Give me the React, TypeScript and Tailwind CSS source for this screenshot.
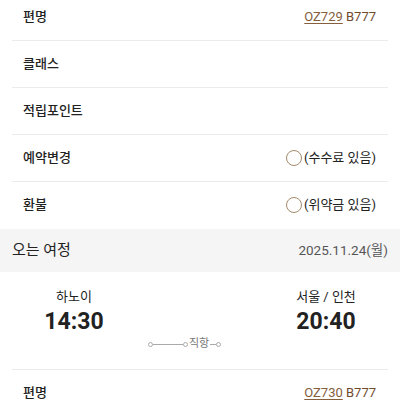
const font = { fontFamily: 'Roboto, "Noto Sans CJK KR", "Noto Sans", sans-serif' };

function Row({ label, children, last }: { label: string; children?: React.ReactNode; last?: boolean }) {
  return (
    <div className={`mx-3 flex h-[46px] items-center justify-between pl-[11px] pr-3 ${last ? "" : "box-content border-b border-[#ececec]"}`}>
      <span className="text-[13px] font-medium text-[#222]">{label}</span>
      {children}
    </div>
  );
}

function Flight({ no }: { no: string }) {
  return (
    <span className="text-[13px] leading-[18px] text-[#6f4b2c]">
      <span className="text-[#86603d] underline underline-offset-2">{no}</span> B777
    </span>
  );
}

function Fee({ text }: { text: string }) {
  return (
    <span className="flex items-center gap-[2px] text-[13px] text-[#222]">
      <span className="h-[16px] w-[16px] rounded-full border-[1.5px] border-[#a48a6c]" />
      {text}
    </span>
  );
}

export default function App() {
  return (
    <div className="h-[400px] w-[400px] overflow-hidden bg-white" style={font}>
      <div className="-mt-[6px]">
        <Row label="편명">
          <Flight no="OZ729" />
        </Row>
        <Row label="클래스" />
        <Row label="적립포인트" />
        <Row label="예약변경">
          <Fee text="(수수료 있음)" />
        </Row>
        <Row label="환불" last>
          <Fee text="(위약금 있음)" />
        </Row>
        <div className="mt-[1px] flex h-[43px] items-center justify-between bg-[#f5f5f5] px-3">
          <span className="text-[15px] text-[#222]">오는 여정</span>
          <span className="text-[13.5px] text-[#555]">2025.11.24(월)</span>
        </div>
        <div className="mx-3 box-content h-[97px] border-b border-[#ececec]">
          <div className="flex justify-between pt-[15px]">
            <div className="flex w-[124px] flex-col items-center">
              <span className="text-[13px] leading-[19px] text-[#222]">하노이</span>
              <span className="text-[23px] font-bold leading-[32px] text-[#222]">14:30</span>
            </div>
            <div className="flex w-[124px] flex-col items-center">
              <span className="text-[13px] leading-[19px] text-[#222]">서울 / 인천</span>
              <span className="text-[23px] font-bold leading-[32px] text-[#222]">20:40</span>
            </div>
          </div>
          <div className="-mt-[1px] ml-[136px] flex items-center text-[#999]">
            <span className="h-[5px] w-[5px] rounded-full border border-[#aaa]" />
            <span className="h-px w-[30px] bg-[#aaa]" />
            <span className="h-[5px] w-[5px] rounded-full border border-[#aaa]" />
            <span className="px-[1px] text-[11px] leading-[14px] text-[#777]">직항</span>
            <span className="h-px w-[6px] bg-[#aaa]" />
            <span className="h-[5px] w-[5px] rounded-full border border-[#aaa]" />
          </div>
        </div>
        <Row label="편명">
          <Flight no="OZ730" />
        </Row>
      </div>
    </div>
  );
}
